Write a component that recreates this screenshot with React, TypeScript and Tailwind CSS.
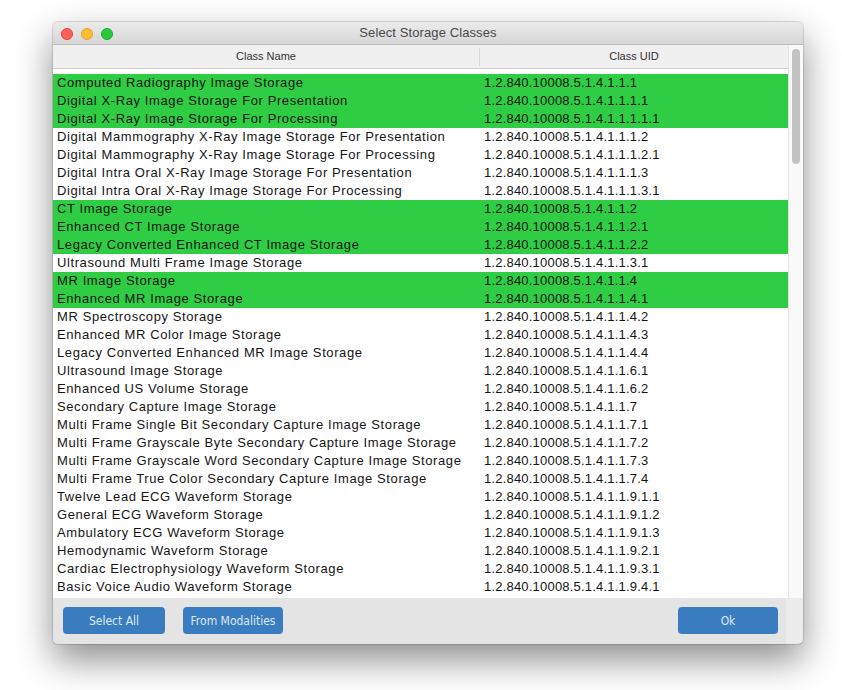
import React from 'react'

type StorageClass = { name: string; uid: string; selected?: boolean }

const P = '1.2.840.10008.5.1.4.1.1.'

const CLASSES: StorageClass[] = [
  { name: 'Computed Radiography Image Storage', uid: P + '1', selected: true },
  { name: 'Digital X-Ray Image Storage For Presentation', uid: P + '1.1', selected: true },
  { name: 'Digital X-Ray Image Storage For Processing', uid: P + '1.1.1', selected: true },
  { name: 'Digital Mammography X-Ray Image Storage For Presentation', uid: P + '1.2' },
  { name: 'Digital Mammography X-Ray Image Storage For Processing', uid: P + '1.2.1' },
  { name: 'Digital Intra Oral X-Ray Image Storage For Presentation', uid: P + '1.3' },
  { name: 'Digital Intra Oral X-Ray Image Storage For Processing', uid: P + '1.3.1' },
  { name: 'CT Image Storage', uid: P + '2', selected: true },
  { name: 'Enhanced CT Image Storage', uid: P + '2.1', selected: true },
  { name: 'Legacy Converted Enhanced CT Image Storage', uid: P + '2.2', selected: true },
  { name: 'Ultrasound Multi Frame Image Storage', uid: P + '3.1' },
  { name: 'MR Image Storage', uid: P + '4', selected: true },
  { name: 'Enhanced MR Image Storage', uid: P + '4.1', selected: true },
  { name: 'MR Spectroscopy Storage', uid: P + '4.2' },
  { name: 'Enhanced MR Color Image Storage', uid: P + '4.3' },
  { name: 'Legacy Converted Enhanced MR Image Storage', uid: P + '4.4' },
  { name: 'Ultrasound Image Storage', uid: P + '6.1' },
  { name: 'Enhanced US Volume Storage', uid: P + '6.2' },
  { name: 'Secondary Capture Image Storage', uid: P + '7' },
  { name: 'Multi Frame Single Bit Secondary Capture Image Storage', uid: P + '7.1' },
  { name: 'Multi Frame Grayscale Byte Secondary Capture Image Storage', uid: P + '7.2' },
  { name: 'Multi Frame Grayscale Word Secondary Capture Image Storage', uid: P + '7.3' },
  { name: 'Multi Frame True Color Secondary Capture Image Storage', uid: P + '7.4' },
  { name: 'Twelve Lead ECG Waveform Storage', uid: P + '9.1.1' },
  { name: 'General ECG Waveform Storage', uid: P + '9.1.2' },
  { name: 'Ambulatory ECG Waveform Storage', uid: P + '9.1.3' },
  { name: 'Hemodynamic Waveform Storage', uid: P + '9.2.1' },
  { name: 'Cardiac Electrophysiology Waveform Storage', uid: P + '9.3.1' },
  { name: 'Basic Voice Audio Waveform Storage', uid: P + '9.4.1' },
]

function Button({ label, className }: { label: string; className: string }) {
  return (
    <button
      className={
        'h-[27px] rounded-[4px] bg-[#3a7cc0] text-[12px] text-[#dfe8f3] [font-family:"DejaVu_Sans_Condensed","DejaVu_Sans",sans-serif] ' +
        className
      }
    >
      {label}
    </button>
  )
}

function Row({ item }: { item: StorageClass }) {
  return (
    <div
      className={
        'flex h-[18px] items-center text-[13px] leading-[18px] text-[#151515] ' +
        (item.selected ? 'bg-[#2ecd44]' : 'bg-white')
      }
    >
      <span className="w-[426px] truncate pl-[4px] tracking-[0.6px]">{item.name}</span>
      <span className="pl-[5px] tracking-[0.2px]">{item.uid}</span>
    </div>
  )
}

export default function App() {
  return (
    <div className="h-[690px] w-[842px] bg-white pl-[53px] pt-[22px] [font-family:'Liberation_Sans',Arial,sans-serif]">
      <div className="flex h-[622px] w-[750px] flex-col overflow-hidden rounded-[5px] bg-[#ececec] shadow-[0_16px_36px_rgba(0,0,0,0.45),0_0_0_1px_rgba(0,0,0,0.12)]">
        {/* title bar */}
        <div className="relative flex h-[23px] shrink-0 items-center justify-center border-b border-[#bdbdbd] bg-gradient-to-b from-[#ebebeb] to-[#d6d6d6]">
          <div className="absolute left-[8px] top-[6px] flex gap-[8px]">
            <span className="h-[12px] w-[12px] rounded-full border border-[#e0443e] bg-[#fe5f57]" />
            <span className="h-[12px] w-[12px] rounded-full border border-[#dea236] bg-[#febc2e]" />
            <span className="h-[12px] w-[12px] rounded-full border border-[#1aab29] bg-[#28c840]" />
          </div>
          <span className="text-[13px] tracking-[0.1px] text-[#4a4a4a]">Select Storage Classes</span>
        </div>

        <div className="flex min-h-0 flex-1">
          <div className="flex w-[735px] flex-col">
            {/* header */}
            <div className="flex h-[24px] shrink-0 items-center border-b border-[#d2d2d2] bg-[#f0f0f0] text-[11px] text-[#333]">
              <div className="flex w-[426px] justify-center">Class Name</div>
              <div className="h-[18px] w-px bg-[#d9d9d9]" />
              <div className="flex flex-1 justify-center">Class UID</div>
            </div>
            {/* list */}
            <div className="flex-1 overflow-hidden bg-white pt-[5px]">
              {CLASSES.map((c) => (
                <Row key={c.uid} item={c} />
              ))}
            </div>
            {/* footer */}
            <div className="flex h-[46px] w-[733px] shrink-0 items-start bg-[#e4e4e4] pl-[10px] pt-[9px]">
              <Button label="Select All" className="w-[102px]" />
              <Button label="From Modalities" className="ml-[18px] w-[100px]" />
              <Button label="Ok" className="ml-auto mr-[8px] w-[100px]" />
            </div>
          </div>
          {/* scrollbar */}
          <div className="flex h-[553px] w-[15px] justify-center border-l border-[#e3e3e3] bg-[#f9f9f9] pt-[4px]">
            <div className="h-[115px] w-[8px] rounded-full bg-[#c2c2c2]" />
          </div>
        </div>
      </div>
    </div>
  )
}
